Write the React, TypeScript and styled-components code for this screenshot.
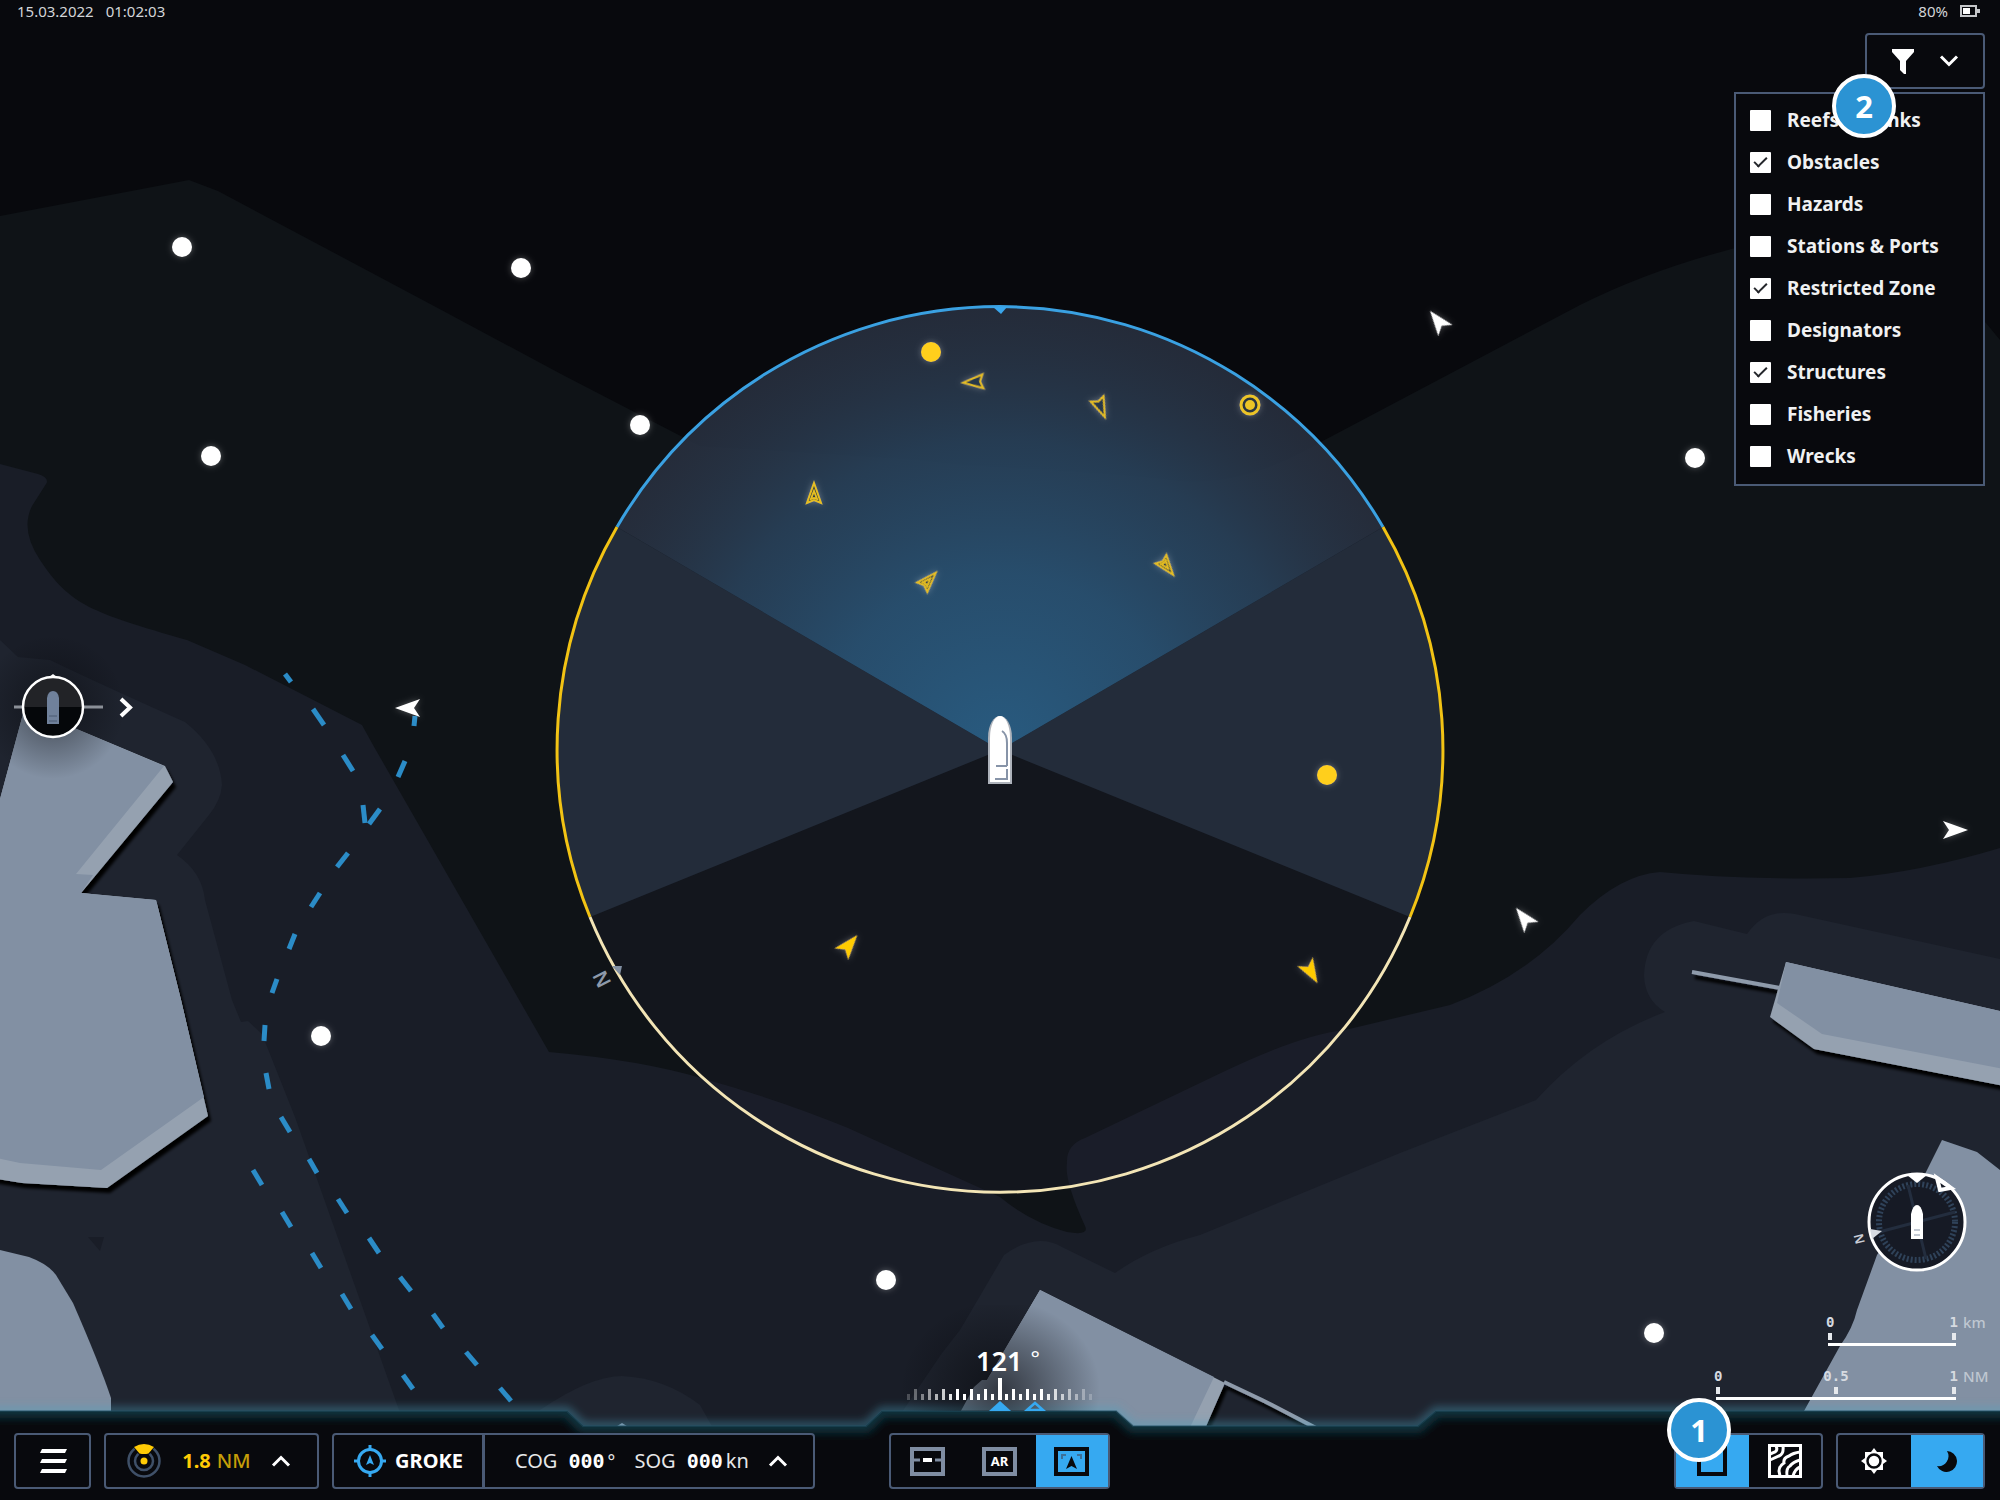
import React, { useState } from "react";
import styled, { createGlobalStyle } from "styled-components";

const color = {
  ink: "#08090d",
  line: "#4a5a75",
  accent: "#36a9f1",
  yellow: "#ffcb05",
  white: "#ffffff",
};

const GlobalStyle = createGlobalStyle`
  *, *::before, *::after { box-sizing: border-box; }
  body { margin: 0; background: ${color.ink}; color: ${color.white}; }
  body, button, input { font-family: "Noto Sans", "Open Sans", sans-serif; }
`;

/* ---------- layout ---------- */

const Screen = styled.div`
  position: relative;
  display: grid;
  grid-template-rows: auto 1fr auto;
  min-height: 100vh;
  overflow: hidden;
`;

const ChartSvg = styled.svg`
  position: absolute;
  inset: 0;
  width: 100%;
  height: 100%;
`;

const StatusBar = styled.header`
  position: relative;
  display: flex;
  justify-content: space-between;
  padding: 0 20px 0 17px;
  font-size: 15px;
  line-height: 22px;
  color: #d3d5d8;
`;

const StatusGroup = styled.div`
  display: flex;
  align-items: center;
  gap: 12px;
`;

const Main = styled.main`
  position: relative;
  display: grid;
  grid-template-columns: 1fr auto 1fr;
`;

const LeftSide = styled.div`
  display: flex;
  align-items: center;
  padding-bottom: 20px;
`;

const CenterSide = styled.div`
  position: relative;
  z-index: 1;
  display: flex;
  align-items: flex-end;
`;

const RightSide = styled.div`
  display: flex;
  flex-direction: column;
  justify-content: space-between;
  align-items: flex-end;
  padding: 11px 15px 11px 0;
`;

const Instruments = styled.div`
  display: flex;
  flex-direction: column;
  align-items: flex-end;
`;

/* ---------- controls ---------- */

const Panel = styled.div<{ $width?: number }>`
  position: relative;
  display: flex;
  width: ${(p) => (p.$width ? `${p.$width}px` : "auto")};
  height: 56px;
  border: 2px solid ${color.line};
  border-radius: 4px;
  background: ${color.ink};
`;

const Control = styled.button<{ $active?: boolean; $divided?: boolean }>`
  display: flex;
  flex: 1 1 auto;
  align-items: center;
  justify-content: center;
  margin: 0;
  padding: 0;
  border: 0;
  border-left: ${(p) => (p.$divided ? `3px solid ${color.line}` : "0")};
  background: ${(p) => (p.$active ? color.accent : "transparent")};
  color: ${color.white};
  font-size: 20px;
  line-height: 24px;
  cursor: pointer;
`;

const Segment = styled(Control)`
  flex: 1 1 0;
`;

const FilterArea = styled.div`
  position: relative;
  display: flex;
  flex-direction: column;
  align-items: flex-end;
  gap: 3px;
`;

const FilterControl = styled(Control)`
  gap: 24px;
`;

const Menu = styled.fieldset`
  width: 251px;
  margin: 0;
  padding: 5px 14px 7px;
  border: 2px solid ${color.line};
  background: ${color.ink};
`;

const Option = styled.label`
  display: flex;
  align-items: center;
  gap: 16px;
  height: 42px;
  color: #f0f1f2;
  font-size: 19px;
  font-weight: 700;
  line-height: 24px;
  white-space: nowrap;
  cursor: pointer;
`;

const Tick = styled.input`
  appearance: none;
  flex: none;
  display: grid;
  place-items: center;
  width: 21px;
  height: 21px;
  margin: 0;
  border-radius: 1px;
  background: ${color.white};

  &:checked::after {
    content: "";
    width: 13px;
    height: 7px;
    margin-bottom: 4px;
    border: solid #24262b;
    border-width: 0 0 2px 2px;
    transform: rotate(-45deg);
  }
`;

const Badge = styled.span<{ $left: number; $top: number }>`
  position: absolute;
  z-index: 2;
  left: ${(p) => p.$left}px;
  top: ${(p) => p.$top}px;
  display: grid;
  place-items: center;
  width: 64px;
  height: 64px;
  border: 4px solid ${color.white};
  border-radius: 50%;
  background: #2b93d3;
  color: ${color.white};
  font-size: 31px;
  font-weight: 700;
  line-height: 40px;
`;

/* ---------- dock ---------- */

const Dock = styled.footer`
  position: relative;
  display: grid;
  grid-template-columns: 1fr auto 1fr;
  align-items: end;
  padding: 22px 15px 11px 14px;
`;

const DockEdge = styled.svg`
  position: absolute;
  left: 0;
  bottom: 0;
  width: 100%;
  height: 110px;
`;

const DockGroup = styled.div<{ $end?: boolean }>`
  position: relative;
  display: flex;
  gap: 13px;
  justify-content: ${(p) => (p.$end ? "flex-end" : "flex-start")};
`;

const RangeControl = styled(Control)`
  justify-content: space-between;
  padding: 0 26px 0 20px;
`;

const VesselControl = styled(Control)`
  flex: none;
  width: 148px;
  gap: 8px;
  font-weight: 700;
`;

const CourseControl = styled(Control)`
  justify-content: space-between;
  padding: 0 25px 0 30px;
`;

const Reading = styled.span`
  display: flex;
  align-items: baseline;
  gap: 3px;
  color: #e6e7e9;
`;

const Distance = styled(Reading)`
  gap: 6px;
  color: #c59e08;
  font-weight: 500;
`;

const Figure = styled.b`
  color: ${color.yellow};
  font-weight: 700;
`;

const MonoFigure = styled.b`
  margin-left: 8px;
  color: ${color.white};
  font-family: "DejaVu Sans Mono", monospace;
  font-weight: 700;
`;

const ArFrame = styled.span`
  display: grid;
  place-items: center;
  width: 35px;
  height: 29px;
  border: 4px solid #7f8da2;
  font-size: 13px;
  font-weight: 700;
  line-height: 16px;
`;

/* ---------- instruments ---------- */

const Heading = styled.div`
  display: flex;
  flex-direction: column;
  align-items: center;
  width: 240px;
  padding-top: 40px;
  background: radial-gradient(ellipse 100px 90px at 50% 80%, rgba(8, 9, 13, 0.65), rgba(8, 9, 13, 0));
`;

const HeadingValue = styled.div`
  display: flex;
  justify-content: center;
  gap: 8px;
  padding-left: 16px;
  font-size: 27px;
  font-weight: 600;
  line-height: 32px;
`;

const Degree = styled.span<{ $small?: boolean }>`
  font-size: ${(p) => (p.$small ? 18 : 22)}px;
  font-weight: 400;
  line-height: 24px;
`;

const Scales = styled.div`
  display: flex;
  flex-direction: column;
  align-items: flex-end;
  gap: 19px;
  padding: 37px 29px 0 0;
`;

const Scale = styled.div<{ $width: number }>`
  position: relative;
  width: ${(p) => p.$width}px;
`;

const ScaleLabels = styled.div`
  display: flex;
  justify-content: space-between;
  margin: 0 -2px;
  color: #d6dae0;
  font-family: "DejaVu Sans Mono", monospace;
  font-size: 14px;
  font-weight: 700;
  line-height: 22px;
`;

const ScaleUnit = styled.span`
  position: absolute;
  left: 100%;
  top: 0;
  padding-left: 7px;
  color: #bfc7d1;
  font-size: 15px;
  font-weight: 500;
  line-height: 22px;
`;

const ScaleRule = styled.div`
  display: flex;
  justify-content: space-between;
  height: 13px;
  border-bottom: 3px solid ${color.white};
`;

const ScaleTick = styled.i`
  width: 4px;
  height: 7px;
  background: #e6e9ed;
`;

/* ---------- chart drawing ---------- */

type Seg = [number, number, number, number];

const routes: Seg[] = [
  [285, 674, 291, 682], [313, 709, 324, 725], [343, 755, 353, 771], [363, 805, 365, 823],
  [415, 716, 414, 726], [405, 761, 398, 777], [380, 809, 369, 824], [348, 853, 337, 867],
  [320, 893, 311, 907], [295, 934, 289, 949], [277, 979, 272, 993], [265, 1025, 264, 1041],
  [266, 1073, 269, 1089], [281, 1117, 290, 1132], [309, 1159, 317, 1173], [338, 1199, 347, 1213],
  [369, 1238, 379, 1253], [400, 1277, 411, 1291], [433, 1314, 443, 1328], [466, 1352, 477, 1365],
  [500, 1388, 511, 1401], [253, 1170, 262, 1185], [282, 1212, 291, 1227], [312, 1253, 321, 1268],
  [342, 1294, 351, 1309], [372, 1335, 382, 1349], [403, 1375, 413, 1389],
];

const buoys: [number, number][] = [
  [182, 247], [521, 268], [640, 425], [211, 456], [321, 1036], [886, 1280], [1654, 1333], [1695, 458],
];

const vessels: [number, number, number][] = [
  [1438, 321, -38], [408, 708, 270], [1955, 830, 90], [1524, 918, -38],
];

const ARROW = "M0 -13 L9 12 L0 6 L-9 12 Z";

function Vessel({ x, y, heading, fill }: { x: number; y: number; heading: number; fill: string }) {
  return <path d={ARROW} transform={`translate(${x} ${y}) rotate(${heading})`} fill={fill} filter="url(#halo)" />;
}

function Target({ x, y, heading, double }: { x: number; y: number; heading: number; double?: boolean }) {
  return (
    <g transform={`translate(${x} ${y}) rotate(${heading})`} stroke="#e6be20" strokeWidth={2} filter="url(#halo)">
      <path d="M0 -10 L7 10 L0 7 L-7 10 Z" fill="#27394b" />
      {double && <path d="M0 -2 L3 6 L0 5 L-3 6 Z" fill="none" />}
    </g>
  );
}

function Ship() {
  return (
    <g>
      <path d="M988 784 V738 C988 724 994 716 1000 716 C1006 716 1012 724 1012 738 V784 Z" fill="#aeb3bb" />
      <path d="M990 782 V738 C990 724 995 716 1000 716 C1005 716 1010 724 1010 738 V782 Z" fill="#fff" />
      <path d="M1002 731 Q1007 734 1007 743 V766 M996 766 H1007 M1007 769 V779 H995" fill="none" stroke="#8794a8" strokeWidth={2} />
    </g>
  );
}

function Chart() {
  return (
    <ChartSvg viewBox="0 0 2000 1500" preserveAspectRatio="xMidYMid slice" aria-label="Sea chart" role="img">
      <defs>
        <radialGradient id="beam" gradientUnits="userSpaceOnUse" cx="1000" cy="750" r="443">
          <stop offset="0" stopColor="#29638c" stopOpacity="0.85" />
          <stop offset="0.4" stopColor="#29618a" stopOpacity="0.62" />
          <stop offset="0.7" stopColor="#285a80" stopOpacity="0.36" />
          <stop offset="1" stopColor="#2a4a66" stopOpacity="0" />
        </radialGradient>
        <radialGradient id="shade">
          <stop offset="0" stopColor="#08090d" stopOpacity="0.55" />
          <stop offset="1" stopColor="#08090d" stopOpacity="0" />
        </radialGradient>
        <filter id="halo" x="-60%" y="-60%" width="220%" height="220%">
          <feDropShadow dx="0" dy="0" stdDeviation="3" floodColor="#fff" floodOpacity="0.3" />
        </filter>
        <filter id="cast" x="-10%" y="-10%" width="120%" height="120%">
          <feDropShadow dx="3" dy="5" stdDeviation="1.5" floodColor="#000" />
        </filter>
      </defs>

      <rect width="2000" height="1500" fill="#08090d" />
      <path
        d="M0 216 L189 180 L218 191 L434 306 L561 374 L700 446 Q800 452 920 460 C1000 470 1060 467 1183 481 Q1240 484 1300 453 L1580 305 Q1660 265 1760 242 Q1880 214 1986 323 L2000 340 V1500 H0 Z"
        fill="#0f1317"
      />
      <path
        d="M0 464 L38 474 Q50 478 46 484 L32 506 Q20 530 40 560 C70 605 90 612 187 640 L245 665 L362 725 L373 745 L549 1052 Q640 1060 701 1078 Q780 1100 848 1128 L1000 1197 Q1030 1222 1067 1232 Q1090 1236 1085 1226 Q1064 1180 1067 1163 Q1066 1145 1085 1138 L1223 1072 Q1300 1035 1345 1030 L1450 1005 Q1530 975 1580 915 Q1620 875 1660 872 Q1740 880 1850 878 Q1920 872 2000 848 V1500 H0 Z"
        fill="#191d27"
      />
      <g fill="#1f242f">
        <path d="M0 640 L18 657 L50 660 Q100 684 185 722 Q220 750 222 785 Q221 800 209 815 L177 855 Q202 872 205 900 L232 1000 L241 1022 L248 1021 L262 1034 L295 1117 L399 1410 V1500 H0 Z" />
        <path d="M540 1410 Q590 1376 622 1376 Q665 1378 700 1405 L714 1430 H540 Z" />
        <path d="M902 1412 L942 1353 L960 1330 L1004 1255 Q1036 1232 1062 1247 L1115 1273 Q1150 1248 1200 1235 L1400 1153 L1536 1100 Q1590 1040 1665 1012 Q1645 1000 1644 976 Q1645 930 1694 921 L1747 934 Q1765 908 1795 914 L2000 959 V1500 H902 Z" />
      </g>
      <path d="M88 1237 H104 L100 1251 Z" fill="#191d27" />

      <g filter="url(#cast)">
        <path d="M-9 860 L0 799 L23 714 L60 722 L165 766 L173 782 L81 893 L156 900 L181 1000 L208 1116 L107 1188 L22 1183 L-9 1178 Z" fill="#95a1b0" />
      </g>
      <path d="M-9 860 L0 799 L23 714 L60 722 L164 766 L76 874 L93 875 L81 893 L156 900 L181 1000 L204 1097 L101 1170 L20 1163 L-9 1157 Z" fill="#8290a3" />
      <path d="M-9 1249 L0 1250 L29 1257 Q48 1264 56 1275 L73 1303 Q100 1365 111 1398 V1500 H-9 Z" fill="#8290a3" />
      <g filter="url(#cast)">
        <path d="M1786 962 L2009 1013 V1087 L1814 1049 L1770 1017 Z" fill="#95a1b0" />
        <path d="M1040 1290 L1225 1383 L1200 1440 H945 L987 1380 Z" fill="#95a1b0" />
        <path d="M1692 972 L1780 988 M1224 1382 L1262 1400 L1272 1405 L1318 1429" stroke="#8f9bab" strokeWidth={4} />
      </g>
      <path d="M1786 962 L2009 1013 V1070 L1822 1034 L1777 1003 Z" fill="#8290a3" />
      <path d="M1040 1290 L1214 1377 L1184 1440 H945 L974 1387 L982 1380 H987 Z" fill="#8290a3" />
      <path d="M1942 1140 L1977 1152 L2000 1170 V1500 H1760 L1804 1411 L1840 1346 Q1853 1328 1857 1310 L1877 1255 L1910 1204 Z" fill="#8290a3" />
      <path d="M614 1428 L622 1423 L630 1428 Z" fill="#8290a3" />

      <g stroke="#2b8cc7" strokeWidth={5}>
        {routes.map(([a, b, c, d]) => <line key={`${a}-${b}`} x1={a} y1={b} x2={c} y2={d} />)}
      </g>

      <circle cx="1000" cy="750" r="443" fill="#1f2130" fillOpacity="0.25" />
      <path d="M1000 750 L617 527 A443 443 0 0 0 590 917 Z M1000 750 L1383 527 A443 443 0 0 1 1410 917 Z" fill="#242d3c" fillOpacity="0.95" />
      <path d="M1000 750 L617 527 A443 443 0 0 1 1383 527 Z" fill="#283140" fillOpacity="0.84" />
      <path d="M1000 750 L617 527 A443 443 0 0 1 1383 527 Z" fill="url(#beam)" />
      <g fill="none" strokeWidth={3}>
        <path d="M617 527 A443 443 0 0 1 1383 527" stroke="#3aa1e2" />
        <path d="M617 527 A443 443 0 0 0 590 917 M1383 527 A443 443 0 0 1 1410 917" stroke="#f2c314" />
        <path d="M590 917 A443 443 0 0 0 1410 917" stroke="#f3e5b6" />
      </g>
      <path d="M993 307 H1007 L1001 314 Z" fill="#3aa6ec" />
      <path d="M612 966 L622 966 L620 975 Z" fill="#8290a3" />
      <text x="0" y="7" transform="translate(602 979) rotate(-117)" textAnchor="middle" fill="#8d99aa" fontFamily="Noto Sans" fontSize="20" fontWeight="600">N</text>

      {buoys.map(([x, y]) => <circle key={x} cx={x} cy={y} r={10} fill="#fff" filter="url(#halo)" />)}
      {vessels.map(([x, y, h]) => <Vessel key={x} x={x} y={y} heading={h} fill="#fff" />)}
      <circle cx="931" cy="352" r="10" fill="#ffcf1a" filter="url(#halo)" />
      <circle cx="1327" cy="775" r="10" fill="#ffcf1a" filter="url(#halo)" />
      <g filter="url(#halo)">
        <circle cx="1250" cy="405" r="9" fill="#2b3440" stroke="#ecc427" strokeWidth={3} />
        <circle cx="1250" cy="405" r="5" fill="#ecc427" />
      </g>
      <Target x={973} y={382} heading={266} />
      <Target x={1101} y={408} heading={157} />
      <Target x={1167} y={567} heading={142} double />
      <Target x={929} y={580} heading={43} double />
      <Target x={814} y={493} heading={0} double />
      <Vessel x={849} y={945} heading={40} fill="#ffcb05" />
      <Vessel x={1311} y={972} heading={150} fill="#ffcb05" />
      <Ship />
    </ChartSvg>
  );
}

/* ---------- icons ---------- */

function Chevron({ dir }: { dir: "up" | "down" }) {
  return (
    <svg width="20" height="12" viewBox="0 0 20 12" fill="none" stroke="#fff" strokeWidth={3} aria-hidden>
      <path d={dir === "up" ? "M2 10.5 L10 2.5 L18 10.5" : "M2 1.5 L10 9.5 L18 1.5"} />
    </svg>
  );
}

function BatteryIcon() {
  return (
    <svg width="20" height="12" viewBox="0 0 20 12" aria-label="Battery">
      <rect x="1" y="1" width="15" height="10" fill="none" stroke="#c4c6c9" strokeWidth={2} />
      <rect x="17" y="4" width="3" height="4" fill="#c4c6c9" />
      <rect x="3" y="3" width="7" height="6" fill="#fff" />
    </svg>
  );
}

function FunnelIcon() {
  return (
    <svg width="24" height="26" viewBox="0 0 24 26" fill="#fff" aria-hidden>
      <path d="M1 1 H23 V4 L15 13 V26 H13 L9 22 V13 L1 4 Z" />
    </svg>
  );
}

function MenuIcon() {
  return (
    <svg width="28" height="26" viewBox="0 0 28 26" fill="#fff" aria-hidden>
      <path d="M3 1 H28 L26 5 H1 Z M3 11 H28 L26 15 H1 Z M3 21 H28 L26 25 H1 Z" />
    </svg>
  );
}

function RadarIcon() {
  return (
    <svg width="36" height="36" viewBox="0 0 36 36" fill="none" aria-hidden>
      <circle cx="18" cy="18" r="15.5" stroke="#3f5068" strokeWidth={2.5} />
      <circle cx="18" cy="18" r="9" stroke="#3f5068" strokeWidth={2.5} />
      <path d="M5 1 L18 18 L31 1 Z" fill={color.ink} />
      <path d="M8 4 Q18 -2 28 4 L22.5 10.5 Q18 11.500 13.5 10.5 Z" fill={color.yellow} />
      <circle cx="18" cy="18" r="3.5" fill={color.yellow} />
    </svg>
  );
}

function VesselIcon() {
  return (
    <svg width="34" height="34" viewBox="0 0 34 34" fill="none" stroke="#36a9f1" strokeWidth={3} aria-hidden>
      <circle cx="17" cy="17" r="11.5" />
      <path d="M17 1 V6 M17 28 V33 M1 17 H6 M28 17 H33" />
      <path d="M17 11 L21 21 L17 19 L13 21 Z" fill="#36a9f1" stroke="none" />
    </svg>
  );
}

function HorizonIcon() {
  return (
    <svg width="35" height="29" viewBox="0 0 35 29" fill="none" aria-hidden>
      <rect x="2" y="2" width="31" height="25" stroke="#7f8da2" strokeWidth={4} />
      <path d="M4 13 H10 M25 13 H31" stroke="#7f8da2" strokeWidth={3} />
      <path d="M13 13 H22" stroke="#fff" strokeWidth={4} />
    </svg>
  );
}

function ChartIcon() {
  return (
    <svg width="35" height="29" viewBox="0 0 35 29" fill="none" aria-hidden>
      <rect x="2" y="2" width="31" height="25" stroke={color.ink} strokeWidth={4} />
      <path d="M8 12 V8 H12 M23 8 H27 V12" stroke="#3d7099" strokeWidth={2} />
      <path d="M17.5 9 L23 22 L17.5 19 L12 22 Z" fill={color.ink} />
    </svg>
  );
}

function SquareIcon() {
  return (
    <svg width="32" height="32" viewBox="0 0 32 32" fill="none" aria-hidden>
      <rect x="3" y="3" width="26" height="26" stroke={color.ink} strokeWidth={4} />
    </svg>
  );
}

function TerrainIcon() {
  return (
    <svg width="34" height="34" viewBox="0 0 34 34" fill="none" stroke="#fff" strokeWidth={3} aria-hidden>
      <rect x="1.5" y="1.5" width="31" height="31" />
      <path d="M8 2 Q10 6 7 8 L2 10" />
      <path d="M15 2 Q16 10 11 12 L2 16" />
      <path d="M32 8 Q25 9 21 12 Q15 14 16 19 Q11 22 11 27 L12 32" />
      <path d="M32 16 Q25 18 22 22 Q18 24 19 32" />
      <path d="M32 23 Q27 25 25 32" />
    </svg>
  );
}

function SunIcon() {
  return (
    <svg width="26" height="26" viewBox="0 0 26 26" aria-hidden>
      <path
        d="M13 0 L16 4 L22 4 L22 10 L26 13 L22 16 L22 22 L16 22 L13 26 L10 22 L4 22 L4 16 L0 13 L4 10 L4 4 L10 4 Z"
        fill="#fff"
      />
      <circle cx="13" cy="13" r="6.5" fill="#fff" stroke={color.ink} strokeWidth={2.5} />
    </svg>
  );
}

function MoonIcon() {
  return (
    <svg width="20" height="22" viewBox="0 0 20 22" aria-hidden>
      <path d="M10 1 A10.5 10.5 0 1 1 0 16 A10 10 0 0 0 10 1 Z" fill={color.ink} />
    </svg>
  );
}

/* ---------- widgets ---------- */

function AttitudeWidget() {
  return (
    <svg width="200" height="200" viewBox="-47 -100 200 200" aria-label="Attitude" role="img">
      <circle cx="6" cy="0" r="72" fill="url(#shade)" />
      <path d="M-33 0 H56" stroke="#8b9098" strokeWidth={3} />
      <circle cx="6" cy="0" r="29" fill="#05070a" />
      <path d="M-23 0 A29 29 0 0 1 35 0 Z" fill="#222327" />
      <circle cx="6" cy="0" r="30" fill="none" stroke="#fff" strokeWidth={2.5} />
      <path d="M2 -30 L6 -33 L10 -30 Z" fill="#fff" />
      <path d="M0 17 V-9 Q1 -16 6 -16 Q11 -16 12 -9 V17 Z" fill="#70819b" />
      <path d="M2 9 H10 M2 14 H10" stroke="#4b5a72" strokeWidth={1} />
      <path d="M74 -8 L83 0.5 L74 9" fill="none" stroke="#fff" strokeWidth={4} />
    </svg>
  );
}

function HeadingTape() {
  const ticks = Array.from({ length: 27 }, (_, i) => i - 13);
  return (
    <svg width="240" height="34" viewBox="-120 0 240 34" aria-hidden>
      {ticks.map((i) => (
        <rect
          key={i}
          x={i * 7 - 2}
          y={i % 2 === 0 ? 12 : 17}
          width={3}
          height={i % 2 === 0 ? 11 : 6}
          fill="#fff"
          opacity={Math.min(1, (15 - Math.abs(i)) / 9)}
        />
      ))}
      <rect x="-2" y="1" width="4" height="22" fill="#fff" />
      <path d="M-11 34 L0 24 L11 34 Z" fill="#36a9f1" />
      <path d="M27 33 L35 26 L43 33 Z" fill="none" stroke="#36a9f1" strokeWidth={2.5} />
    </svg>
  );
}

function CompassWidget() {
  return (
    <svg width="140" height="104" viewBox="-88 -52 140 104" aria-label="Compass" role="img">
      <g transform="translate(-16 0)">
        <circle r="48" fill="#161a25" stroke="#fff" strokeWidth={3} />
        <circle r="38" fill="none" stroke="#2f4259" strokeWidth={6} strokeDasharray="2 2" />
        <path d="M-38 10 L38 -10 M-9 -37 L9 37" stroke="#232d3e" strokeWidth={3} />
        <path d="M-10 -47 Q0 -50 10 -47 L0 -39 Z" fill="#fff" />
        <path d="M20 -44 L34 -34 L23 -32 Z" fill="#161a25" stroke="#fff" strokeWidth={4} />
        <path d="M-47 7 L-35 9 L-45 17 Z" fill="#d7dbe1" />
        <path d="M-6 17 V-8 Q-4 -17 0 -17 Q4 -17 6 -8 V17 Z" fill="#fff" />
        <path d="M-3 8 H3 M-3 13 H3" stroke="#8794a8" strokeWidth={1} />
        <text x="0" y="5" transform="translate(-58 17) rotate(-104)" textAnchor="middle" fill="#c9ced6" fontFamily="Noto Sans" fontSize="13" fontWeight="600">N</text>
      </g>
    </svg>
  );
}

function ScaleBar({ width, marks, unit }: { width: number; marks: string[]; unit: string }) {
  return (
    <Scale $width={width}>
      <ScaleLabels>{marks.map((m) => <span key={m}>{m}</span>)}</ScaleLabels>
      <ScaleUnit>{unit}</ScaleUnit>
      <ScaleRule>{marks.map((m) => <ScaleTick key={m} />)}</ScaleRule>
    </Scale>
  );
}

const EDGE = "M-20 21 H567 L583 36 H866 L882 21 H1116 L1133 36 H1418 L1436 21 H2020";

function DockBackdrop() {
  return (
    <DockEdge viewBox="0 0 2000 110" preserveAspectRatio="none" aria-hidden>
      <defs>
        <filter id="edgeGlow" filterUnits="userSpaceOnUse" x="-40" y="-20" width="2080" height="160">
          <feGaussianBlur stdDeviation="4" />
        </filter>
        <clipPath id="dockShape"><path d={`${EDGE} V110 H-20 Z`} /></clipPath>
      </defs>
      <path d={EDGE} fill="none" stroke="#4aa3c4" strokeOpacity="0.45" strokeWidth={8} filter="url(#edgeGlow)" />
      <path d={`${EDGE} V110 H-20 Z`} fill={color.ink} />
      <g clipPath="url(#dockShape)">
        <path d={EDGE} fill="none" stroke="#123a46" strokeOpacity="0.85" strokeWidth={14} filter="url(#edgeGlow)" />
      </g>
      <path d={EDGE} fill="none" stroke="#245266" strokeOpacity="0.45" strokeWidth={2} />
    </DockEdge>
  );
}

const initialLayers = [
  { name: "Reefs & Banks", on: false },
  { name: "Obstacles", on: true },
  { name: "Hazards", on: false },
  { name: "Stations & Ports", on: false },
  { name: "Restricted Zone", on: true },
  { name: "Designators", on: false },
  { name: "Structures", on: true },
  { name: "Fisheries", on: false },
  { name: "Wrecks", on: false },
];

export default function App() {
  const [layers, setLayers] = useState(initialLayers);
  const [view, setView] = useState("chart");
  const [base, setBase] = useState("plain");
  const [night, setNight] = useState(true);

  const toggle = (name: string) =>
    setLayers((list) => list.map((l) => (l.name === name ? { ...l, on: !l.on } : l)));

  return (
    <Screen>
      <GlobalStyle />
      <Chart />
      <StatusBar>
        <StatusGroup><span>15.03.2022</span><span>01:02:03</span></StatusGroup>
        <StatusGroup><span>80%</span><BatteryIcon /></StatusGroup>
      </StatusBar>

      <Main>
        <LeftSide><AttitudeWidget /></LeftSide>
        <CenterSide>
          <Heading>
            <HeadingValue>121<Degree>°</Degree></HeadingValue>
            <HeadingTape />
          </Heading>
        </CenterSide>
        <RightSide>
          <FilterArea>
            <Panel $width={120}>
              <FilterControl aria-label="Filter chart layers" aria-expanded><FunnelIcon /><Chevron dir="down" /></FilterControl>
              <Badge $left={-35} $top={39}>2</Badge>
            </Panel>
            <Menu aria-label="Chart layers">
              {layers.map((l) => (
                <Option key={l.name}>
                  <Tick type="checkbox" checked={l.on} onChange={() => toggle(l.name)} />
                  {l.name}
                </Option>
              ))}
            </Menu>
          </FilterArea>
          <Instruments>
            <CompassWidget />
            <Scales>
              <ScaleBar width={128} marks={["0", "1"]} unit="km" />
              <ScaleBar width={240} marks={["0", "0.5", "1"]} unit="NM" />
            </Scales>
          </Instruments>
        </RightSide>
      </Main>

      <Dock>
        <DockBackdrop />
        <DockGroup>
          <Panel $width={77}><Control aria-label="Menu"><MenuIcon /></Control></Panel>
          <Panel $width={215}>
            <RangeControl>
              <RadarIcon />
              <Distance><Figure>1.8</Figure>NM</Distance>
              <Chevron dir="up" />
            </RangeControl>
          </Panel>
          <Panel $width={483}>
            <VesselControl><VesselIcon />GROKE</VesselControl>
            <CourseControl $divided>
              <Reading>COG <MonoFigure>000</MonoFigure><Degree $small>°</Degree></Reading>
              <Reading>SOG <MonoFigure>000</MonoFigure><span>kn</span></Reading>
              <Chevron dir="up" />
            </CourseControl>
          </Panel>
        </DockGroup>
        <DockGroup>
          <Panel $width={221}>
            <Segment aria-label="Horizon view" $active={view === "horizon"} onClick={() => setView("horizon")}><HorizonIcon /></Segment>
            <Segment $active={view === "ar"} onClick={() => setView("ar")}><ArFrame>AR</ArFrame></Segment>
            <Segment aria-label="Chart view" $active={view === "chart"} onClick={() => setView("chart")}><ChartIcon /></Segment>
          </Panel>
        </DockGroup>
        <DockGroup $end>
          <Panel $width={149}>
            <Segment aria-label="Plain base" $active={base === "plain"} onClick={() => setBase("plain")}><SquareIcon /></Segment>
            <Segment aria-label="Terrain base" $active={base === "terrain"} onClick={() => setBase("terrain")}><TerrainIcon /></Segment>
            <Badge $left={-9} $top={-37}>1</Badge>
          </Panel>
          <Panel $width={149}>
            <Segment aria-label="Day mode" $active={!night} onClick={() => setNight(false)}><SunIcon /></Segment>
            <Segment aria-label="Night mode" $active={night} onClick={() => setNight(true)}><MoonIcon /></Segment>
          </Panel>
        </DockGroup>
      </Dock>
    </Screen>
  );
}
